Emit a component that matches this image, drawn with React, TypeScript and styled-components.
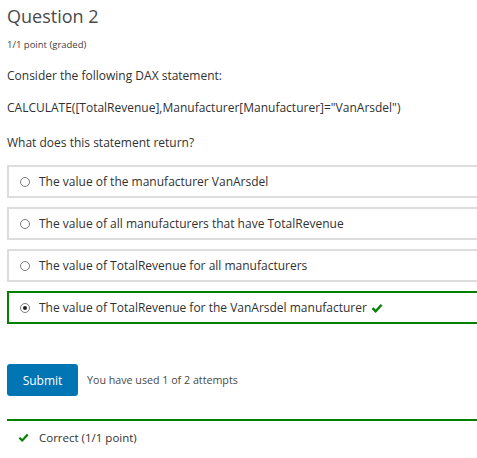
import React from "react";
import styled, { createGlobalStyle } from "styled-components";

const Global = createGlobalStyle`
  html, body { margin: 0; padding: 0; background: #fff; }
  body { font-family: "Open Sans", "Liberation Sans", sans-serif; color: #313131; overflow: hidden; }
`;

const Page = styled.div`
  width: 477px;
  height: 458px;
  padding: 4px 0 0 7px;
  box-sizing: border-box;
  overflow: hidden;
`;

const Title = styled.h3`
  margin: 0;
  font-size: 18px;
  font-weight: 400;
  line-height: 24px;
  color: #4a4a4a;
`;

const Graded = styled.div`
  margin-top: 10px;
  font-size: 9.5px;
  line-height: 14px;
  color: #414141;
`;

const Para = styled.p<{ $mt: number }>`
  margin: 0;
  margin-top: ${(p) => p.$mt}px;
  font-size: 12px;
  line-height: 18px;
`;

const Options = styled.div`
  margin-top: 13px;
  display: flex;
  flex-direction: column;
  gap: 9px;
  width: 480px;
`;

const Option = styled.label<{ $correct?: boolean }>`
  display: flex;
  align-items: center;
  height: 33px;
  box-sizing: border-box;
  border: 2px solid ${(p) => (p.$correct ? "#008100" : "#dddddd")};
  padding-left: 10px;
  font-size: 12px;
  color: #313131;
`;

const Radio = styled.span<{ $checked?: boolean }>`
  width: 10px;
  height: 10px;
  border: 1px solid #7a7a7a;
  border-radius: 50%;
  box-sizing: border-box;
  margin-right: 9px;
  margin-left: 1px;
  display: inline-flex;
  align-items: center;
  justify-content: center;
  &::after {
    content: "";
    display: ${(p) => (p.$checked ? "block" : "none")};
    width: 4px;
    height: 4px;
    border-radius: 50%;
    background: #222;
  }
`;

const Check = ({ size = 12 }: { size?: number }) => (
  <svg width={size} height={size} viewBox="0 0 12 12" style={{ marginLeft: 4 }}>
    <path d="M1.5 6.2 L4.6 9.2 L10.6 2.8" fill="none" stroke="#008100" strokeWidth="2.4" strokeLinejoin="miter" />
  </svg>
);

const ActionRow = styled.div`
  margin-top: 40px;
  display: flex;
  align-items: center;
  gap: 9px;
`;

const SubmitButton = styled.button`
  width: 71px;
  height: 32px;
  border: none;
  border-radius: 3px;
  background: #0075b4;
  color: #fff;
  font-family: "Open Sans", "Liberation Sans", sans-serif;
  font-size: 12px;
  padding: 0;
`;

const Attempts = styled.span`
  font-size: 10.7px;
  color: #4a4a4a;
`;

const Feedback = styled.div`
  margin-top: 23px;
  border-top: 2px solid #008100;
  width: 480px;
  display: flex;
  align-items: center;
  padding: 9px 0 0 7px;
  font-size: 11.5px;
  gap: 10px;
`;

export default function App() {
  const opts = [
    "The value of the manufacturer VanArsdel",
    "The value of all manufacturers that have TotalRevenue",
    "The value of TotalRevenue for all manufacturers",
    "The value of TotalRevenue for the VanArsdel manufacturer",
  ];
  return (
    <>
      <Global />
      <Page>
        <Title>Question 2</Title>
        <Graded>1/1 point (graded)</Graded>
        <Para $mt={15}>Consider the following DAX statement:</Para>
        <Para $mt={14}>CALCULATE([TotalRevenue],Manufacturer[Manufacturer]="VanArsdel")</Para>
        <Para $mt={17}>What does this statement return?</Para>
        <Options>
          {opts.map((o, i) => (
            <Option key={i} $correct={i === 3}>
              <Radio $checked={i === 3} />
              {o}
              {i === 3 && <Check />}
            </Option>
          ))}
        </Options>
        <ActionRow>
          <SubmitButton>Submit</SubmitButton>
          <Attempts>You have used 1 of 2 attempts</Attempts>
        </ActionRow>
        <Feedback>
          <Check size={11} />
          <span>Correct (1/1 point)</span>
        </Feedback>
      </Page>
    </>
  );
}
